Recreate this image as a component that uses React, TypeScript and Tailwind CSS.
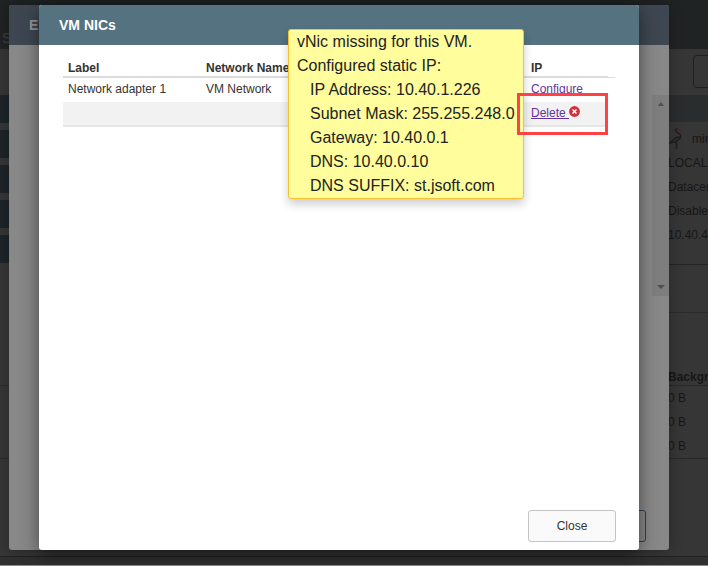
import React from "react";

const sideButtons = [1, 2, 3, 4, 5];
const details = ["LOCAL", "Datacenter", "Disabled", "10.40.4.10"];
const usage = ["0 B", "0 B", "0 B"];

const tooltipDetails = [
  "IP Address: 10.40.1.226",
  "Subnet Mask: 255.255.248.0",
  "Gateway: 10.40.0.1",
  "DNS: 10.40.0.10",
  "DNS SUFFIX: st.jsoft.com",
];

const ErrorIcon = () => (
  <svg viewBox="0 0 10 10" className="inline size-[11px] align-baseline" aria-hidden="true">
    <circle cx="5" cy="5" r="4.9" fill="#d0313b" />
    <path d="M3.2 3.2l3.6 3.6M6.8 3.2L3.2 6.8" stroke="#fff" strokeWidth="1.3" />
  </svg>
);

const VmIcon = () => (
  <svg viewBox="0 0 14 24" className="h-6 w-[14px] shrink-0" fill="none" aria-hidden="true">
    <path
      d="M7.5 22V13.5C11 12 12.5 10 11.5 8C10.5 6 6.5 5.5 6.5 3.5C6.5 2.3 8 2 9 2.3"
      stroke="#1e1e1e"
      strokeWidth="1.6"
    />
    <path d="M11 10L7 10.5L1 16L7.5 14.5" stroke="#1e1e1e" strokeWidth="1.4" />
    <path d="M8 2C10 1.5 11.5 3 12 5" stroke="#4b2929" strokeWidth="1.3" />
  </svg>
);

const Page = () => (
  <div className="flex min-h-screen flex-col overflow-hidden border-b border-[#8c8c8c] bg-[#363636] text-xs whitespace-nowrap text-[#161616]">
    <header className="h-[49px] bg-[#202324] pt-[30px] pl-[2px] text-sm leading-4 text-[#3c3f41]">
      S
    </header>
    <div className="flex grow justify-between">
      <aside className="w-[9px] shrink-0 pt-[46px]">
        <div className="flex flex-col gap-[7px]">
          {sideButtons.map((n) => (
            <div key={n} className="h-7 bg-[#1d2529]" />
          ))}
        </div>
        <div className="mt-[122px] h-[74px] border-y border-[#2c2c2c]" />
      </aside>
      <main className="w-10 shrink-0 overflow-hidden pt-[6px]">
        <div className="ml-[25px] h-[33px] w-20 rounded-sm border border-[#202020]" />
        <div className="mt-[7px] h-[27px] bg-[#2a2d2e]" />
        <div className="border-b border-[#242424] pt-[5px] pb-[17px]">
          <div className="flex h-6 items-center gap-[9px] pl-px">
            <VmIcon />
            <span>min</span>
          </div>
          {details.map((item) => (
            <div key={item} className="h-6 leading-6">
              {item}
            </div>
          ))}
        </div>
        <div className="h-12 border-b border-[#2b2b2b]" />
        <div className="mt-[56px] h-[17px] border-b border-[#282828] leading-4 font-bold">
          Background
        </div>
        <div className="border-b border-[#282828]">
          {usage.map((item, i) => (
            <div key={i} className="h-6 leading-6">
              {item}
            </div>
          ))}
        </div>
      </main>
    </div>
    <footer className="h-[9px] border-t border-[#202020] bg-[#303030]" />
  </div>
);

const EditDialog = () => (
  <div className="absolute inset-0 flex pt-[5px] pr-[39px] pb-4 pl-[9px]">
    <section className="flex grow flex-col overflow-hidden rounded-[3px] bg-[#888888] shadow-[0_0_14px_rgba(0,0,0,0.3)]">
      <h2 className="h-10 bg-[#3e4751] pl-5 text-sm leading-10 font-bold text-[#929599]">E</h2>
      <div className="flex grow flex-col items-end justify-between pt-[50px] pb-2">
        <div className="flex h-[201px] w-[17px] flex-col items-center justify-between bg-[#7e7e7e] py-[7px]">
          <svg viewBox="0 0 6 4" className="h-1 w-[6px]">
            <path d="M0 4L3 0L6 4Z" fill="#505050" />
          </svg>
          <svg viewBox="0 0 8 4" className="h-1 w-2">
            <path d="M0 0H8L4 4Z" fill="#505050" />
          </svg>
        </div>
        <div className="mr-[23px] h-8 w-[88px] rounded-[3px] border border-[#2f4352]" />
      </div>
    </section>
  </div>
);

const NicTooltip = () => (
  <div
    role="tooltip"
    className="absolute top-6 right-[115px] w-[236px] rounded-[3px] border border-[#fac02e] bg-[#fffd9c] pl-2 text-base leading-6 whitespace-nowrap text-[#222222] shadow-[0_5px_10px_rgba(0,0,0,0.2)]"
  >
    <p>vNic missing for this VM.</p>
    <p>Configured static IP:</p>
    <ul className="pl-[13px]">
      {tooltipDetails.map((line) => (
        <li key={line}>{line}</li>
      ))}
    </ul>
  </div>
);

const NicTable = () => (
  <table className="w-full table-fixed border-separate border-spacing-0 text-left text-xs text-[#333333]">
    <thead>
      <tr className="leading-4">
        <th className="w-[138px] border-b-2 border-[#dcdcdc] px-[5px] py-0">Label</th>
        <th className="border-b-2 border-[#dcdcdc] px-[5px] py-0">Network Name</th>
        <th className="relative w-[82px] border-b-2 border-[#dcdcdc] px-[5px] py-0">
          IP
          <span className="absolute -right-[7px] -bottom-[2px] h-px w-[7px] bg-[#dcdcdc]" />
        </th>
      </tr>
    </thead>
    <tbody>
      <tr className="h-6 align-top leading-[22px]">
        <td className="px-[5px] py-0">Network adapter 1</td>
        <td className="px-[5px] py-0">VM Network</td>
        <td className="px-[5px] py-0">
          <a href="#configure" className="text-[#663399] underline">
            Configure
          </a>
        </td>
      </tr>
      <tr className="h-[25px] bg-[#f2f2f2] align-top leading-[22px]">
        <td className="border-b-2 border-[#e6e6e6] p-0" />
        <td className="border-b-2 border-[#e6e6e6] p-0" />
        <td className="border-b-2 border-[#e6e6e6] px-[5px] py-0">
          <a href="#delete" className="whitespace-pre text-[#663399] underline">
            {"Delete "}
          </a>
          <ErrorIcon />
        </td>
      </tr>
    </tbody>
  </table>
);

const NicDialog = () => (
  <div className="absolute inset-0 flex pt-[5px] pr-[69px] pb-4 pl-[39px]">
    <section
      role="dialog"
      aria-labelledby="nic-title"
      className="relative flex grow flex-col rounded-[3px] bg-white shadow-[0_4px_18px_rgba(0,0,0,0.5)]"
    >
      <h2
        id="nic-title"
        className="h-10 rounded-t-[3px] bg-[#54727f] pl-5 text-sm leading-10 font-bold text-white"
      >
        VM NICs
      </h2>
      <div className="grow pt-[15px] pr-[31px] pl-6">
        <NicTable />
      </div>
      <div className="flex justify-end pr-[23px] pb-2">
        <button
          type="button"
          className="h-8 w-[88px] rounded-[3px] border border-[#c4c4c4] bg-[#fafafa] text-xs text-[#333333]"
        >
          Close
        </button>
      </div>
      <NicTooltip />
      <div className="pointer-events-none absolute top-[88px] right-[31px] h-[42px] w-[91px] border-3 border-[#ff4242]" />
    </section>
  </div>
);

export default function App() {
  return (
    <div className="relative min-h-screen overflow-hidden font-['Liberation_Sans',Arial,sans-serif]">
      <Page />
      <EditDialog />
      <NicDialog />
    </div>
  );
}
